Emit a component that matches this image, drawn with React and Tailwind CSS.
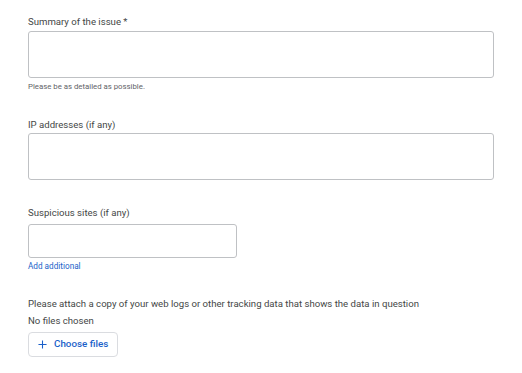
import React from 'react'

function Label({ children, className = '' }) {
  return <div className={`text-[9.6px] leading-[12px] text-[#444746] ${className}`}>{children}</div>
}

export default function App() {
  return (
    <div className="w-[522px] h-[373px] bg-white pl-[28px] pt-[16px] font-['Roboto',sans-serif]">
      <Label>Summary of the issue *</Label>
      <textarea className="mt-[3px] block w-[466px] h-[47px] rounded-[3px] border border-[#bfc1c4] resize-none" />
      <div className="mt-[4px] text-[7.8px] leading-[10px] text-[#5f6368]">Please be as detailed as possible.</div>

      <Label className="mt-[27px]">IP addresses (if any)</Label>
      <textarea className="mt-[2px] block w-[466px] h-[47px] rounded-[3px] border border-[#bfc1c4] resize-none" />

      <Label className="mt-[27px]">Suspicious sites (if any)</Label>
      <input className="mt-[5px] block w-[209px] h-[34px] rounded-[3px] border border-[#bfc1c4]" />
      <div className="mt-[3px] text-[8.2px] leading-[10px] text-[#1a5fc9]">Add additional</div>

      <Label className="mt-[27px]">Please attach a copy of your web logs or other tracking data that shows the data in question</Label>
      <Label className="mt-[5px]">No files chosen</Label>
      <button className="mt-[5px] flex items-center gap-[7px] h-[25px] w-[90px] rounded-[4px] border border-[#dadce0] pl-[9px] text-[9.8px] font-medium text-[#1a5fc9]">
        <svg width="9" height="9" viewBox="0 0 10 10" fill="none" stroke="#1a5fc9" strokeWidth="1.2">
          <path d="M5 0.5v9M0.5 5h9" />
        </svg>
        Choose files
      </button>
    </div>
  )
}
